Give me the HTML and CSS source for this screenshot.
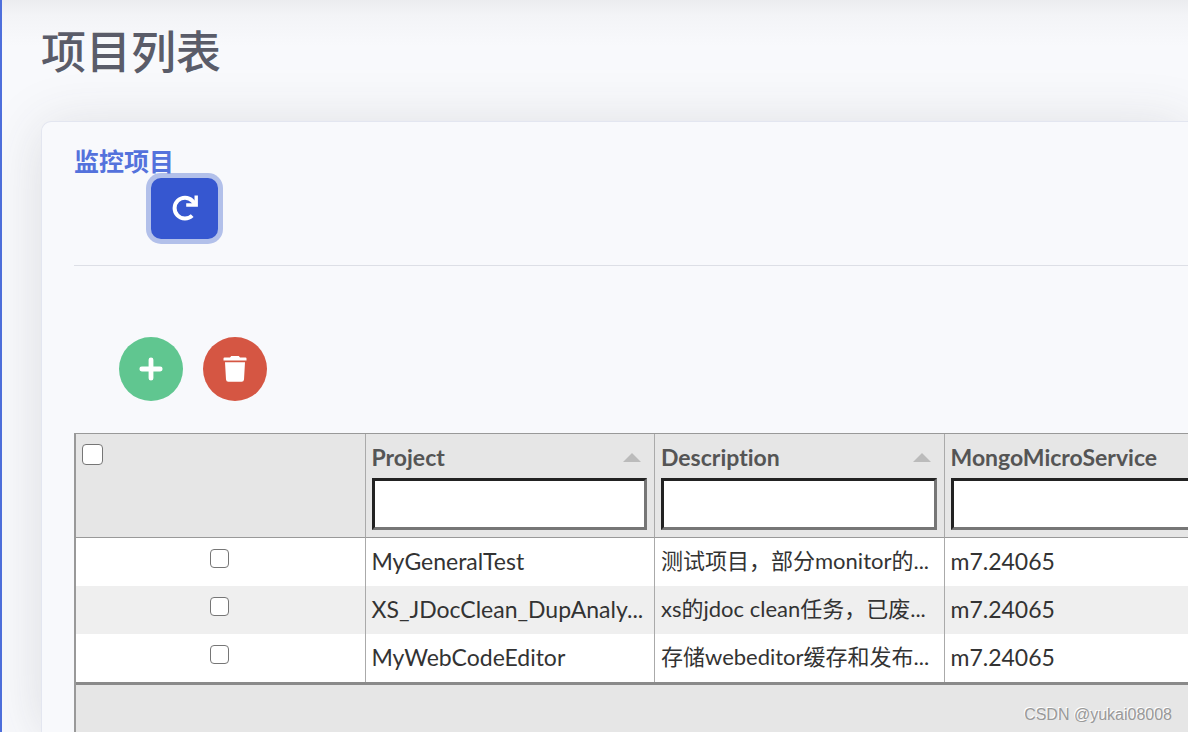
FILE: index.html
```html
<!DOCTYPE html>
<html lang="zh-CN">
<head>
<meta charset="utf-8">
<title>项目列表</title>
<link rel="stylesheet" href="styles.css">
</head>
<body>
<main class="page">
  <h1 class="page-title">项目列表</h1>
  <section class="card">
    <header class="card-header">
      <h2 class="card-title">监控项目</h2>
      <button class="btn-refresh" type="button" aria-label="刷新">
        <svg class="icon-refresh" viewBox="0 0 26 28" aria-hidden="true">
          <path d="M20.200 20.600A10.400 10.400 0 1 1 20.400 5.800L23 8.600" fill="none" stroke="#fff" stroke-width="4"/>
          <path d="M24.200 0.400V10H14.200" fill="none" stroke="#fff" stroke-width="3.400"/>
        </svg>
      </button>
    </header>
    <div class="card-body">
      <div class="actions">
        <button class="btn-circle btn-add" type="button" aria-label="添加">
          <svg class="icon-plus" viewBox="0 0 24 24" aria-hidden="true"><path d="M12 2.800V21.200M2.800 12H21.200" stroke="#fff" stroke-width="4.800" stroke-linecap="round"/></svg>
        </button>
        <button class="btn-circle btn-delete" type="button" aria-label="删除">
          <svg class="icon-trash" viewBox="0 0 24 28" aria-hidden="true"><path fill="#fff" d="M1.500 2.400H7L8.200 1H15.800L17 2.400H22.500Q23.500 2.400 23.500 3.400V5.600H.5V3.400Q.5 2.400 1.500 2.400ZM2 7.200H22L21 24.600Q20.800 26.800 18.600 26.800H5.400Q3.200 26.800 3 24.600Z"/></svg>
        </button>
      </div>
      <div class="grid">
        <table class="grid-table">
          <colgroup><col class="col"><col class="col"><col class="col"><col class="col"></colgroup>
          <thead>
            <tr>
              <th class="cell-head cell-all"><input class="check check-all" type="checkbox" aria-label="全选"></th>
              <th class="cell-head">
                <div class="head-row"><label for="f-project">Project</label><span class="sort"></span></div>
                <input class="filter" id="f-project" type="text">
              </th>
              <th class="cell-head">
                <div class="head-row"><label for="f-description">Description</label><span class="sort"></span></div>
                <input class="filter" id="f-description" type="text">
              </th>
              <th class="cell-head">
                <div class="head-row"><label for="f-service">MongoMicroService</label><span class="sort"></span></div>
                <input class="filter" id="f-service" type="text">
              </th>
            </tr>
          </thead>
          <tbody>
            <tr class="row">
              <td class="cell cell-check"><input class="check" type="checkbox" aria-label="MyGeneralTest"></td>
              <td class="cell">MyGeneralTest</td>
              <td class="cell cell-description">测试项目，部分monitor的...</td>
              <td class="cell">m7.24065</td>
            </tr>
            <tr class="row">
              <td class="cell cell-check"><input class="check" type="checkbox" aria-label="XS_JDocClean_DupAnaly"></td>
              <td class="cell">XS_JDocClean_DupAnaly...</td>
              <td class="cell cell-description">xs的jdoc clean任务，已废...</td>
              <td class="cell">m7.24065</td>
            </tr>
            <tr class="row">
              <td class="cell cell-check"><input class="check" type="checkbox" aria-label="MyWebCodeEditor"></td>
              <td class="cell">MyWebCodeEditor</td>
              <td class="cell cell-description">存储webeditor缓存和发布...</td>
              <td class="cell">m7.24065</td>
            </tr>
          </tbody>
        </table>
        <div class="grid-footer"></div>
      </div>
    </div>
  </section>
</main>
<div class="watermark">CSDN @yukai08008</div>
</body>
</html>
```
FILE: styles.css
```css
* { box-sizing: border-box; }

body {
  margin: 0;
  height: 100vh;
  overflow: hidden;
  background: #f8f9fc;
  color: #333;
  font-family: Lato, "Noto Sans CJK SC", sans-serif;
  font-size: 23px;
  font-variant-ligatures: none;
}

.page {
  display: flex;
  flex-direction: column;
  min-height: 100%;
  padding-left: 39px;
  border-left: 2px solid #4e6fdc;
  background: linear-gradient(#ebecef, #f3f4f7 16px, #f8f9fc 46px);
}

.page-title {
  margin: 0;
  padding: 22px 0 39px;
  color: #5a5c69;
  font-size: 45px;
  font-weight: 500;
  line-height: 60px;
}

.card {
  display: flex;
  flex: 1;
  flex-direction: column;
  border: solid #e3e6f0;
  border-width: 1px 0 0 1px;
  border-radius: 10px 0 0 0;
  background: #f8f9fc;
  box-shadow: 0 5px 56px rgba(58, 59, 69, .15);
}

.card-header {
  margin-left: 32px;
  padding: 22px 0 26px;
  border-bottom: 1px solid #dddfe6;
}

.card-title {
  margin: 0;
  color: #5472dc;
  font-size: 25px;
  font-weight: 700;
  line-height: 34px;
}

.btn-refresh {
  display: flex;
  align-items: center;
  justify-content: center;
  width: 67px;
  height: 61px;
  margin-left: 77px;
  padding: 0;
  border: 0;
  border-radius: 10px;
  background: #3657d0;
  box-shadow: 0 0 0 5px #b2c0ea;
}

.icon-refresh { width: 26px; height: 28px; }

.card-body {
  display: flex;
  flex: 1;
  flex-direction: column;
  padding: 71px 0 0 32px;
}

.actions {
  display: flex;
  gap: 20px;
  padding: 0 0 32px 45px;
}

.btn-circle {
  display: flex;
  align-items: center;
  justify-content: center;
  width: 64px;
  height: 64px;
  padding: 0;
  border: 0;
  border-radius: 50%;
}

.btn-add { background: #60c690; }
.btn-delete { background: #d55643; }
.icon-plus { width: 24px; height: 24px; }
.icon-trash { width: 24px; height: 28px; }

.grid {
  display: flex;
  flex: 1;
  flex-direction: column;
  overflow: hidden;
  border: solid #999;
  border-width: 1px 0 0 2px;
  background: #e6e6e6;
}

.grid-table {
  width: 1158px;
  table-layout: fixed;
  border-spacing: 0;
}

.col { width: 25%; }

.cell-head {
  height: 104px;
  padding: 6px 7px 7px 6px;
  border-right: 1px solid #aaa;
  border-bottom: 1px solid #999;
  color: #555;
  font-weight: 700;
  text-align: left;
  vertical-align: top;
}

.cell-all { padding-top: 10px; line-height: 0; }

.head-row {
  display: flex;
  align-items: center;
  justify-content: space-between;
  height: 34px;
  margin-bottom: 4px;
  padding-right: 6px;
}

.sort {
  border: 9px solid transparent;
  border-top: 0;
  border-bottom: 9px solid #bbb;
}

.filter {
  display: block;
  width: 100%;
  height: 52px;
  padding: 4px;
  border: 3px solid;
  border-color: #222 #767676 #767676 #222;
  border-radius: 0;
  background: #fff;
  font: inherit;
}

.row { background: #fff; }
.row:nth-child(even) { background: #efefef; }

.cell {
  height: 48px;
  padding: 0 6px 2px;
  overflow: hidden;
  border-right: 1px solid #aaa;
  line-height: 32px;
  white-space: nowrap;
}

.cell-description { font-size: 22px; }

.cell-check {
  padding: 0 8px 8px 6px;
  line-height: 0;
  text-align: center;
}

.check {
  width: 19px;
  height: 19px;
  margin: 0;
  appearance: none;
  border: 1px solid #767676;
  border-radius: 4px;
  background: #fff;
}

.check:checked { background: #4e73df; }

.check-all { width: 21px; height: 21px; }

.grid-footer {
  flex: 1;
  border-top: 3px solid #8a8a8a;
}

.watermark {
  position: absolute;
  right: 16px;
  bottom: 7px;
  color: #999;
  font-family: "Liberation Sans", sans-serif;
  font-size: 16px;
  line-height: 20px;
  text-shadow: -1px -1px 0 #fff;
}
```
